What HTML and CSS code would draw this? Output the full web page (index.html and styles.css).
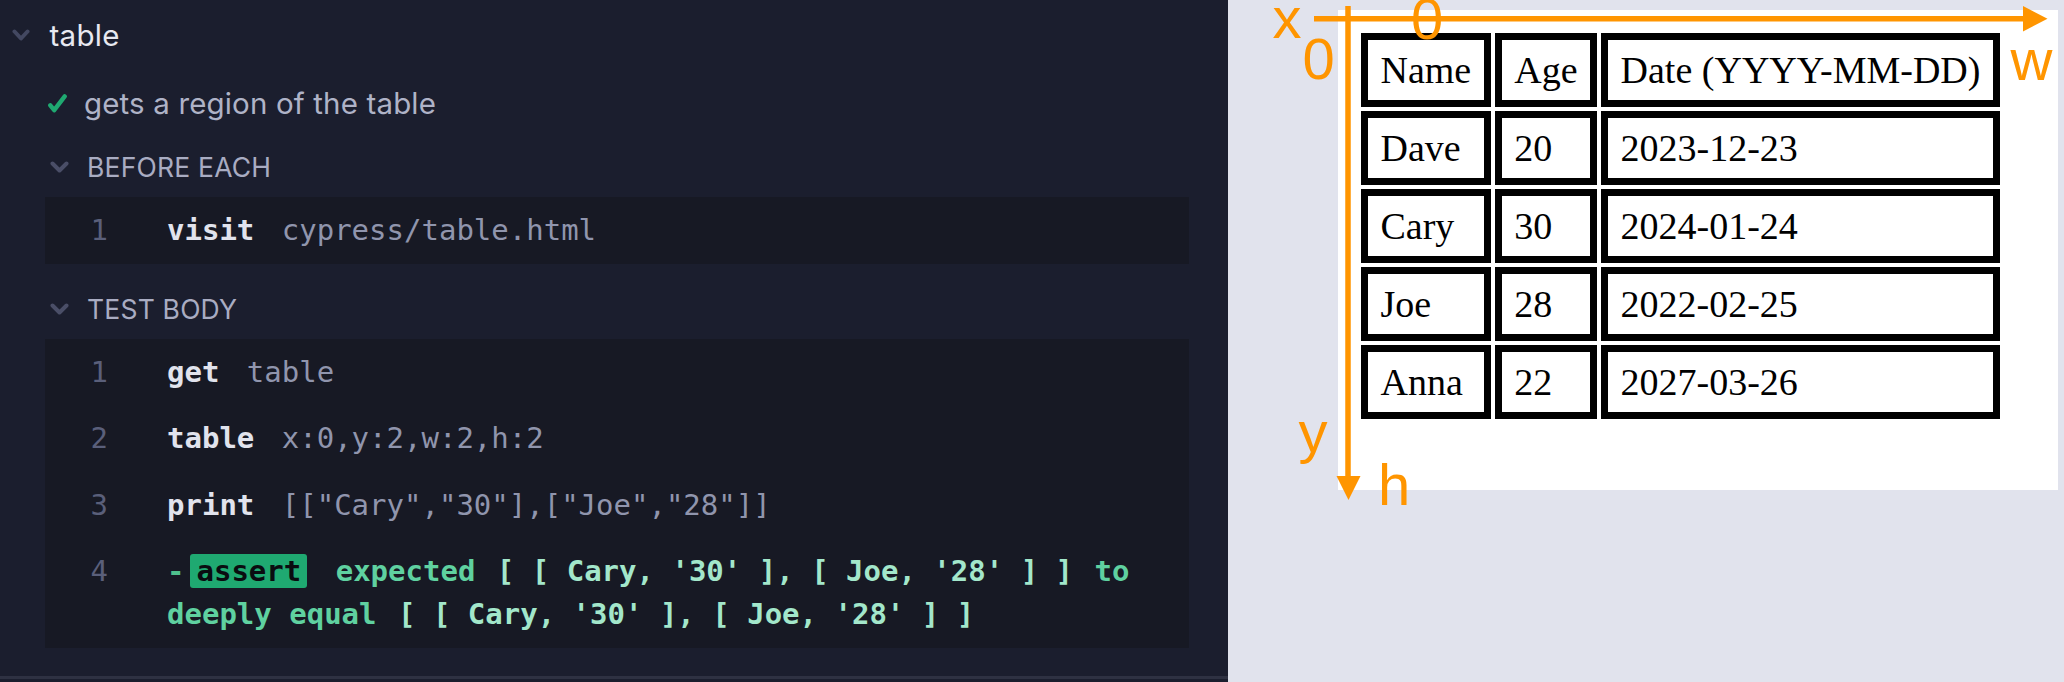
FILE: index.html
```html
<!DOCTYPE html>
<html lang="en">
<head>
<meta charset="utf-8">
<title>table</title>
<link rel="stylesheet" href="styles.css">
</head>
<body>
<div class="app">
  <section class="reporter">
    <div class="runnables">
      <div class="suite-title">
        <svg class="chev chev-suite" viewBox="0 0 18 12" width="18" height="12"><path d="M2.5 2.5 L9 9.5 L15.5 2.5"/></svg>
        <span class="suite-name">table</span>
      </div>
      <div class="test-title">
        <svg class="check" viewBox="0 0 19 19" width="19" height="19"><path d="M2.3 11.3 L6.2 16.2 L16.7 2.4"/></svg>
        <span class="test-name">gets a region of the table</span>
      </div>
      <div class="hook">
        <div class="hook-title">
          <svg class="chev chev-hook" viewBox="0 0 19 12" width="19" height="12"><path d="M2.5 2.5 L9.5 9.5 L16.5 2.5"/></svg>
          <span class="hook-name">BEFORE EACH</span>
        </div>
        <div class="commands">
          <div class="cmd">
            <span class="num">1</span>
            <span class="body"><span class="name">visit</span> <span class="arg">cypress/table.html</span></span>
          </div>
        </div>
      </div>
      <div class="hook">
        <div class="hook-title">
          <svg class="chev chev-hook" viewBox="0 0 19 12" width="19" height="12"><path d="M2.5 2.5 L9.5 9.5 L16.5 2.5"/></svg>
          <span class="hook-name">TEST BODY</span>
        </div>
        <div class="commands">
          <div class="cmd">
            <span class="num">1</span>
            <span class="body"><span class="name">get</span> <span class="arg">table</span></span>
          </div>
          <div class="cmd">
            <span class="num">2</span>
            <span class="body"><span class="name">table</span> <span class="arg">x:0,y:2,w:2,h:2</span></span>
          </div>
          <div class="cmd">
            <span class="num">3</span>
            <span class="body"><span class="name">print</span> <span class="arg">[["Cary","30"],["Joe","28"]]</span></span>
          </div>
          <div class="cmd">
            <span class="num">4</span>
            <span class="body"><span class="dash">-</span><span class="badge">assert</span> <span class="word">expected</span> <strong class="val">[ [ Cary, '30' ], [ Joe, '28' ] ]</strong> <span class="word">to deeply equal</span> <strong class="val">[ [ Cary, '30' ], [ Joe, '28' ] ]</strong></span>
          </div>
        </div>
      </div>
    </div>
  </section>
  <section class="aut">
    <div class="frame">
      <table class="data">
        <tr><td>Name</td><td>Age</td><td>Date (YYYY-MM-DD)</td></tr>
        <tr><td>Dave</td><td>20</td><td>2023-12-23</td></tr>
        <tr><td>Cary</td><td>30</td><td>2024-01-24</td></tr>
        <tr><td>Joe</td><td>28</td><td>2022-02-25</td></tr>
        <tr><td>Anna</td><td>22</td><td>2027-03-26</td></tr>
      </table>
    </div>
    <svg class="axes" viewBox="0 0 836 682" width="836" height="682">
      <line x1="86" y1="18.7" x2="797" y2="18.7"/>
      <polygon points="795,6 819.5,18.7 795,31.4"/>
      <line x1="120" y1="6" x2="120" y2="478"/>
      <polygon points="108.5,476 132.5,476 120.5,500"/>
      <text x="44.5" y="38">x</text>
      <text x="183" y="38.5">0</text>
      <text x="74.6" y="79.3">0</text>
      <text x="782.5" y="80">w</text>
      <text x="70.5" y="452">y</text>
      <text x="150" y="505">h</text>
    </svg>
  </section>
</div>
</body>
</html>
```

FILE: styles.css
```css
* { box-sizing: border-box; }
html, body { margin: 0; padding: 0; }
body { width: 2064px; height: 682px; overflow: hidden; background: #1b1e2e; }

.app { display: flex; width: 2064px; height: 682px; }

/* ---------- reporter (left) ---------- */
.reporter {
  width: 1228px;
  flex: none;
  background: #1b1e2e;
  font-family: Inter, "Noto Sans", sans-serif;
}
.runnables { height: 679px; border-bottom: 3px solid #2e3142; }

.suite-title { height: 69px; display: flex; align-items: center; padding-left: 12px; }
.chev { flex: none; fill: none; stroke-width: 4; stroke-linecap: round; stroke-linejoin: round; }
.chev-suite { stroke: #434861; }
.suite-name { margin-left: 19.5px; font-size: 29.5px; letter-spacing: 0.3px; color: #e8e9f1; }

.test-title { height: 68px; display: flex; align-items: center; padding-left: 47.5px; }
.check { flex: none; fill: none; stroke: #1fa971; stroke-width: 4.4; stroke-linecap: round; stroke-linejoin: round; }
.test-name { margin-left: 17.5px; font-size: 29.5px; letter-spacing: 0.15px; color: #afb3c7; }

.hook + .hook { margin-top: 15.5px; }
.hook-title { height: 60px; display: flex; align-items: center; padding-left: 50px; }
.chev-hook { stroke: #4a4e67; }
.hook-name { margin-left: 18px; font-size: 26.5px; letter-spacing: 0.2px; color: #a9acc2; }

.commands { margin-left: 45px; width: 1144px; background: #171924; }
.cmd {
  display: flex;
  padding: 11.5px 20px 12px 0;
  font-family: "DejaVu Sans Mono", "Liberation Mono", monospace;
  font-size: 29px;
  line-height: 43px;
}
.num { width: 63px; flex: none; text-align: right; color: #5a5f7a; }
.body { margin-left: 59px; flex: 1; min-width: 0; }
.name { font-weight: bold; color: #e1e3ed; margin-right: 10px; }
.arg { color: #9095ad; }

.dash { font-weight: bold; color: #4fc08d; }
.badge {
  margin-left: 6px;
  margin-right: 11px;
  padding: 0 6px;
  border-radius: 3px;
  background: #1fa971;
  color: #0a0c10;
  font-weight: bold;
}
.word { font-weight: bold; color: #5fd1a0; }
.val { font-weight: bold; color: #a3e7cb; margin: 0 4px; }

/* ---------- app under test (right) ---------- */
.aut { position: relative; flex: 1; background: #e1e3ed; }
.frame {
  margin: 10px 0 0 110px;
  width: 720px;
  height: 480px;
  padding: 19px;
  background: #ffffff;
}
.data {
  border-collapse: separate;
  border-spacing: 4px;
  font-family: "Liberation Serif", "Times New Roman", serif;
  font-size: 38px;
  color: #000;
}
.data td {
  border: 7px solid #000;
  padding: 9px 12.5px;
  line-height: 42px;
  white-space: nowrap;
}

.axes { position: absolute; left: 0; top: 0; overflow: visible; pointer-events: none; }
.axes line { stroke: #ff9500; stroke-width: 5.5; }
.axes polygon { fill: #ff9500; }
.axes text { font-family: "Liberation Sans", Arial, sans-serif; font-size: 58px; fill: #ff9500; }
```
